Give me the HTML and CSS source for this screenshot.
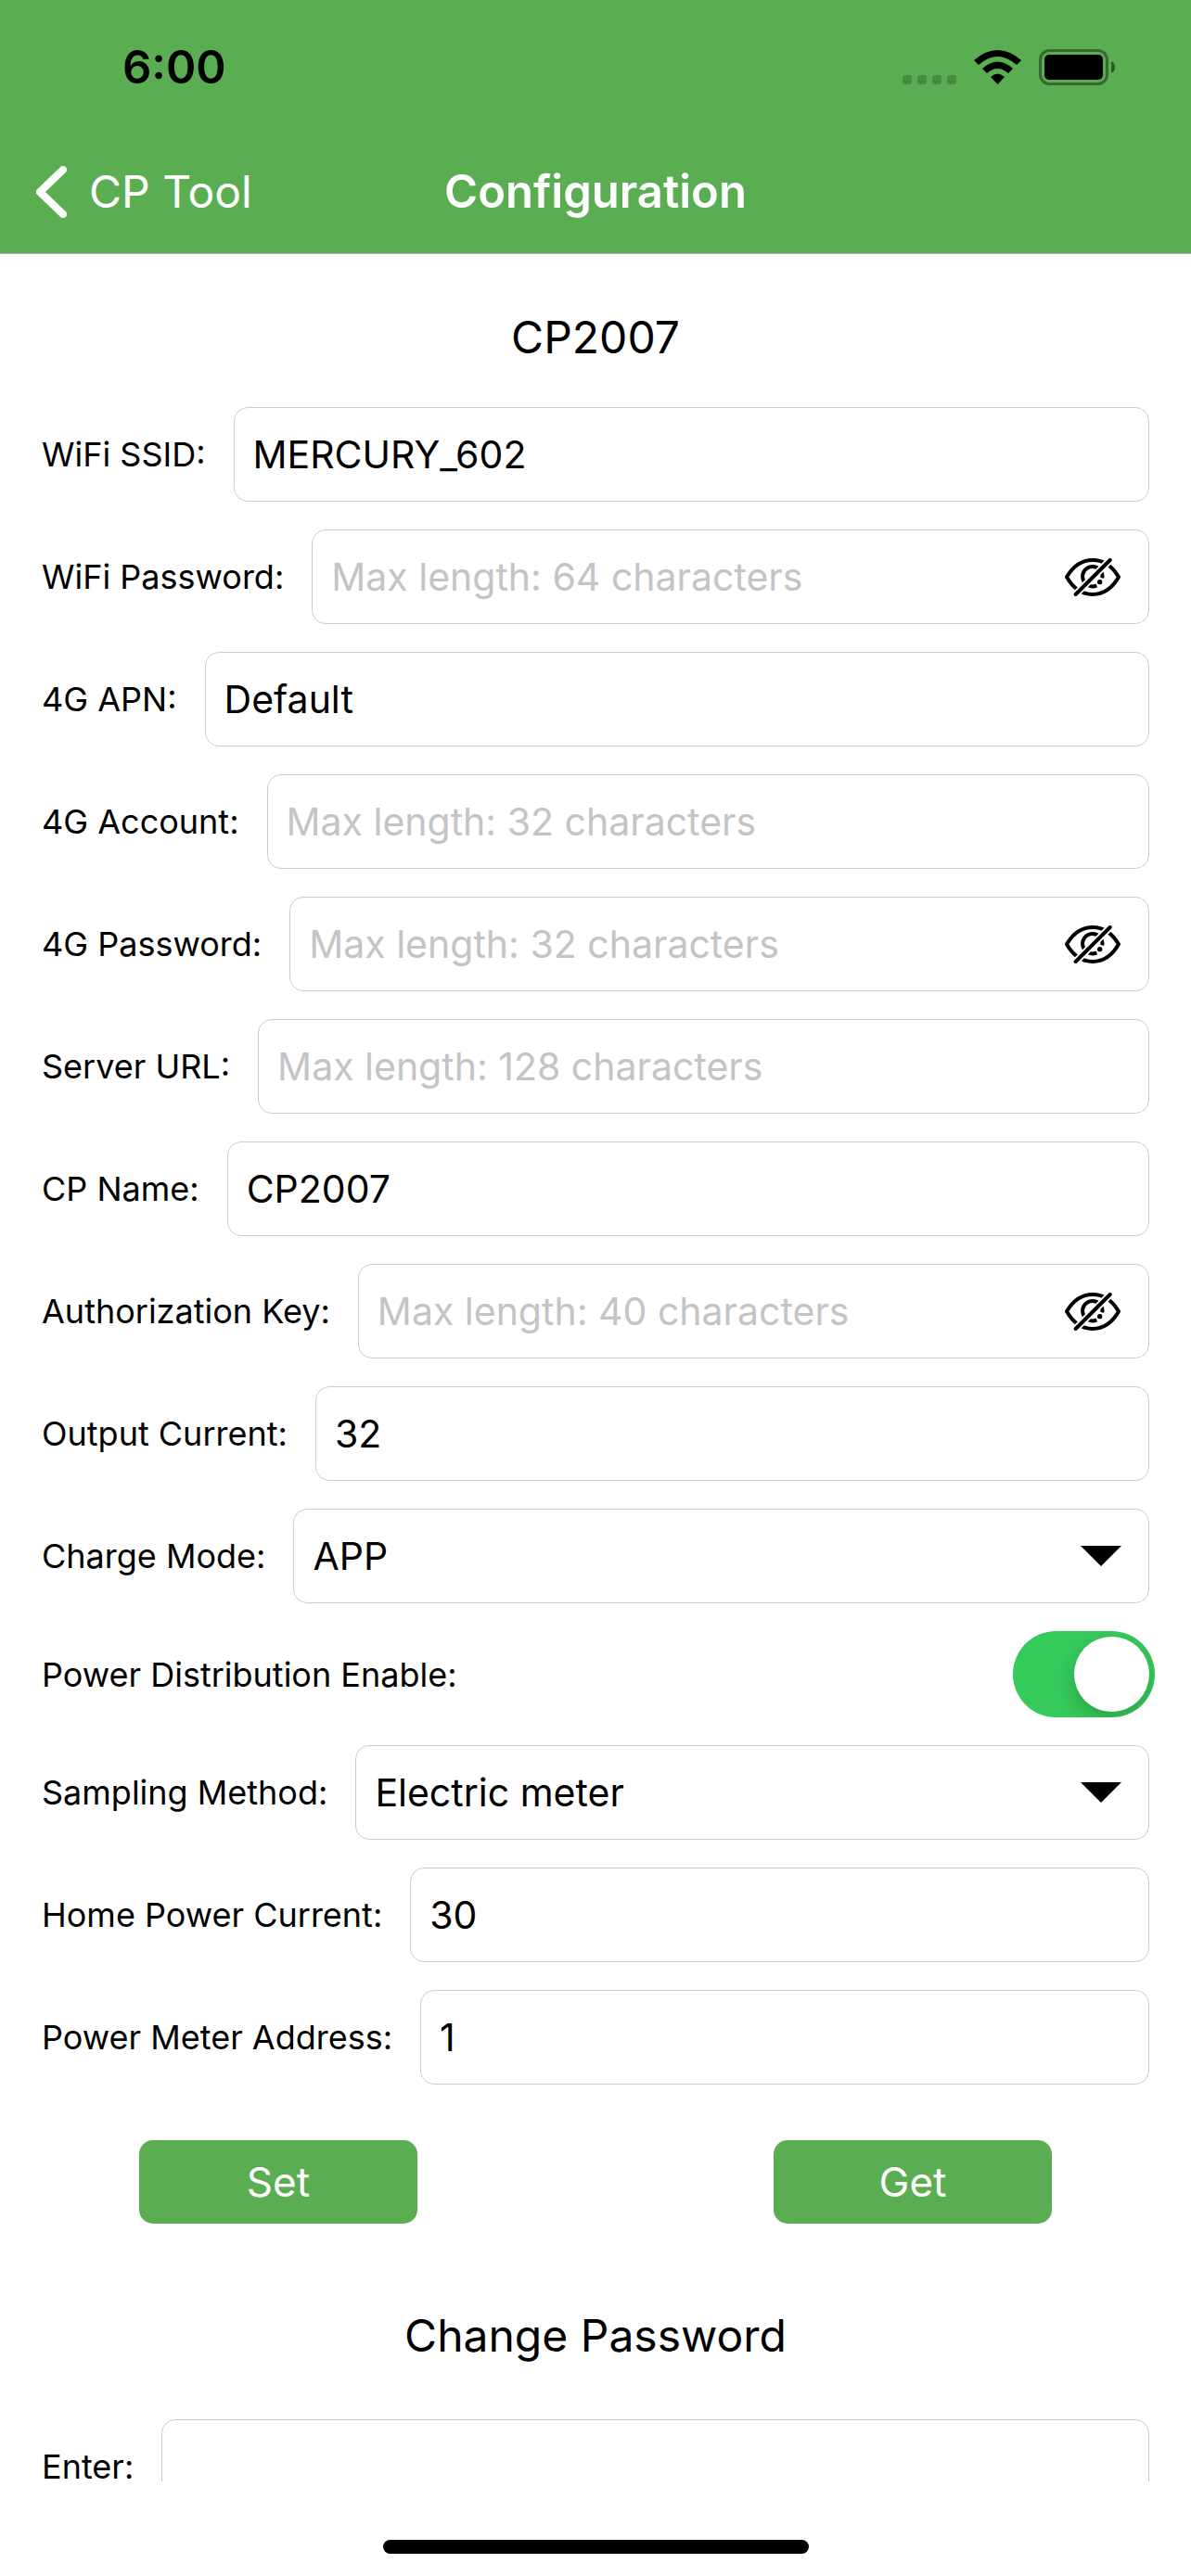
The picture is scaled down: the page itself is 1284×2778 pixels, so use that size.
FILE: index.html
```html
<!DOCTYPE html>
<html lang="en">
<head>
<meta charset="utf-8">
<meta name="viewport" content="width=device-width, initial-scale=1">
<title>Configuration</title>
<link rel="stylesheet" href="styles.css">
</head>
<body>
<svg class="sprite" aria-hidden="true">
  <mask id="slash-gap" maskUnits="userSpaceOnUse" x="0" y="0" width="180" height="123">
    <rect width="180" height="123" fill="#fff"/>
    <path d="M25 127L156 -4" stroke="#000" stroke-width="23"/>
  </mask>
  <symbol id="eye-off" viewBox="0 0 180 123">
    <g fill="none" stroke="currentColor" stroke-width="12">
      <g mask="url(#slash-gap)">
        <path d="M6 61Q38 6 90 6T174 61Q142 117 90 117T6 61Z" stroke-linejoin="round"/>
        <path d="M121 64A32 32 0 1 0 103 88"/>
      </g>
      <path d="M35 117L146 6" stroke-linecap="round"/>
    </g>
    <circle cx="113" cy="77" r="8" fill="currentColor"/>
  </symbol>
  <symbol id="caret" viewBox="0 0 44 22">
    <path d="M0 0H44L22 22Z" fill="currentColor"/>
  </symbol>
</svg>

<header class="header">
  <div class="status">
    <span class="time">6:00</span>
    <div class="status-icons">
      <svg class="cell" viewBox="0 0 58 10" aria-hidden="true">
        <rect width="10" height="10" rx="3"/><rect x="16" width="10" height="10" rx="3"/>
        <rect x="32" width="10" height="10" rx="3"/><rect x="48" width="10" height="10" rx="3"/>
      </svg>
      <svg class="wifi" viewBox="0 0 51 37" aria-hidden="true">
        <path d="M0 11Q25.500-11 51 11L46 16Q25.500-2 5 16Z"/>
        <path d="M9 20Q25.500 5 42 20L37 25Q25.500 15 14 25Z"/>
        <path d="M18 29Q25.500 22 33 29L25.500 37Z"/>
      </svg>
      <svg class="battery" viewBox="0 0 82 39" aria-hidden="true">
        <rect x="1.500" y="1.500" width="72" height="36" rx="10" fill="none" stroke="#000" stroke-opacity=".4" stroke-width="3"/>
        <rect x="6" y="6" width="63" height="27" rx="5"/>
        <path d="M78 13Q82 15 82 19.500T78 26Z" fill-opacity=".5"/>
      </svg>
    </div>
  </div>
  <nav class="nav">
    <a class="back" href="#">
      <svg class="chevron" viewBox="0 0 33 56" aria-hidden="true"><path d="M29 4L4 28L29 52"/></svg>
      CP Tool
    </a>
    <h1 class="nav-title">Configuration</h1>
  </nav>
</header>

<main class="content">
  <form class="form">
    <h2 class="heading">CP2007</h2>
    <div class="rows">
      <div class="row"><label for="ssid">WiFi SSID:</label><div class="field"><input id="ssid" type="text" value="MERCURY_602"></div></div>
      <div class="row"><label for="wifi-pw">WiFi Password:</label><div class="field"><input id="wifi-pw" type="password" placeholder="Max length: 64 characters"><button class="reveal" type="button" aria-label="Show WiFi password"><svg><use href="#eye-off"/></svg></button></div></div>
      <div class="row"><label for="apn">4G APN:</label><div class="field"><input id="apn" type="text" value="Default"></div></div>
      <div class="row"><label for="account">4G Account:</label><div class="field"><input id="account" type="text" placeholder="Max length: 32 characters"></div></div>
      <div class="row"><label for="apn-pw">4G Password:</label><div class="field"><input id="apn-pw" type="password" placeholder="Max length: 32 characters"><button class="reveal" type="button" aria-label="Show 4G password"><svg><use href="#eye-off"/></svg></button></div></div>
      <div class="row"><label for="server">Server URL:</label><div class="field"><input id="server" type="text" placeholder="Max length: 128 characters"></div></div>
      <div class="row"><label for="cp-name">CP Name:</label><div class="field"><input id="cp-name" type="text" value="CP2007"></div></div>
      <div class="row"><label for="auth">Authorization Key:</label><div class="field"><input id="auth" type="password" placeholder="Max length: 40 characters"><button class="reveal" type="button" aria-label="Show authorization key"><svg><use href="#eye-off"/></svg></button></div></div>
      <div class="row"><label for="current">Output Current:</label><div class="field"><input id="current" type="text" value="32"></div></div>
      <div class="row"><label for="mode">Charge Mode:</label><div class="field"><select id="mode"><option>APP</option></select><svg class="caret" aria-hidden="true"><use href="#caret"/></svg></div></div>
      <div class="row row-switch"><label for="distribution">Power Distribution Enable:</label><input class="switch" id="distribution" type="checkbox" role="switch" checked></div>
      <div class="row"><label for="sampling">Sampling Method:</label><div class="field"><select id="sampling"><option>Electric meter</option></select><svg class="caret" aria-hidden="true"><use href="#caret"/></svg></div></div>
      <div class="row"><label for="home">Home Power Current:</label><div class="field"><input id="home" type="text" value="30"></div></div>
      <div class="row"><label for="meter">Power Meter Address:</label><div class="field"><input id="meter" type="text" value="1"></div></div>
    </div>
    <div class="actions">
      <button class="button" type="button">Set</button>
      <button class="button" type="button">Get</button>
    </div>
  </form>
  <form class="form">
    <h2 class="heading heading-password">Change Password</h2>
    <div class="row"><label for="enter">Enter:</label><div class="field"><input id="enter" type="password"></div></div>
  </form>
</main>

<footer class="home-area"><div class="home-bar"></div></footer>
</body>
</html>
```
FILE: styles.css
```css
* {
  box-sizing: border-box;
}

body {
  margin: 0;
  height: 100vh;
  display: flex;
  flex-direction: column;
  background: #fff;
  color: #000;
  font-family: Inter, "Liberation Sans", sans-serif;
  font-size: 36px;
}

.sprite {
  position: absolute;
  width: 0;
  height: 0;
}

.header {
  flex: none;
  background: #5aae51;
  border-bottom: 1px solid #a9b3a8;
}

.status {
  display: flex;
  justify-content: space-between;
  align-items: center;
  height: 141px;
  padding: 4px 82px 0 132px;
}

.time {
  font-size: 49px;
  font-weight: 600;
  line-height: 60px;
}

.status-icons {
  display: flex;
  align-items: flex-end;
  gap: 19px;
}

.cell {
  width: 58px;
  height: 10px;
  margin-bottom: 1px;
  fill: #488c41;
}

.wifi {
  width: 51px;
  height: 37px;
  margin-bottom: 1px;
}

.battery {
  width: 82px;
  height: 39px;
}

.nav {
  display: grid;
  grid-template-columns: 1fr auto 1fr;
  align-items: center;
  height: 132px;
  padding: 0 39px;
  color: #fff;
  line-height: 60px;
}

.back {
  display: flex;
  align-items: center;
  gap: 24px;
  color: inherit;
  font-size: 48px;
  text-decoration: none;
  white-space: nowrap;
}

.chevron {
  width: 33px;
  height: 56px;
  fill: none;
  stroke: #fff;
  stroke-width: 8;
  stroke-linecap: round;
  stroke-linejoin: round;
}

.nav-title {
  margin: 0;
  font-size: 49px;
  font-weight: 600;
}

.content {
  flex: 1;
  min-height: 0;
  overflow-y: auto;
  scrollbar-width: none;
  padding: 60px 45px;
}

.heading {
  margin: 0 0 45px;
  font-size: 48px;
  font-weight: 400;
  line-height: 60px;
  text-align: center;
}

.heading-password {
  margin: 91px 0 60px;
}

.rows {
  display: flex;
  flex-direction: column;
  gap: 30px;
}

.row {
  display: flex;
  align-items: center;
  gap: 30px;
}

.row label {
  flex: none;
  line-height: 32px;
}

.row-switch {
  justify-content: space-between;
}

.field {
  position: relative;
  flex: 1;
  min-width: 0;
  height: 102px;
  display: flex;
  align-items: center;
  border: 1px solid #ccc;
  border-radius: 15px;
}

.field input,
.field select {
  flex: 1;
  min-width: 0;
  height: 100%;
  padding: 0 20px;
  border: 0;
  background: none;
  color: inherit;
  font: inherit;
  font-size: 41px;
  appearance: none;
  outline: none;
}

.field input::placeholder {
  color: #c4c4c6;
  opacity: 1;
}

.reveal {
  flex: none;
  display: flex;
  margin: 0 30px 0 0;
  padding: 0;
  border: 0;
  background: none;
  color: #000;
}

.reveal svg {
  width: 60px;
  height: 41px;
}

.caret {
  position: absolute;
  top: 39px;
  right: 29px;
  width: 44px;
  height: 22px;
  pointer-events: none;
}

.switch {
  flex: none;
  display: flex;
  align-items: center;
  width: 153px;
  height: 93px;
  margin: 0 -6px 0 0;
  padding: 6px;
  border-radius: 47px;
  background: #d8d8dc;
  appearance: none;
  overflow: hidden;
}

.switch::before {
  content: "";
  width: 81px;
  height: 81px;
  border-radius: 50%;
  background: #fff;
  box-shadow: 0 9px 24px rgba(0, 0, 0, 0.2);
}

.switch:checked {
  justify-content: flex-end;
  background: #36ca5b;
}

.actions {
  display: flex;
  justify-content: space-between;
  margin-top: 60px;
  padding: 0 105px;
}

.button {
  width: 300px;
  height: 90px;
  padding: 0;
  border: 0;
  border-radius: 15px;
  background: #5aae51;
  color: #fff;
  font: inherit;
  font-size: 44px;
}

.home-area {
  flex: none;
  display: flex;
  justify-content: center;
  align-items: flex-end;
  height: 102px;
  padding-bottom: 24px;
}

.home-bar {
  width: 459px;
  height: 15px;
  border-radius: 8px;
  background: #000;
}
```
